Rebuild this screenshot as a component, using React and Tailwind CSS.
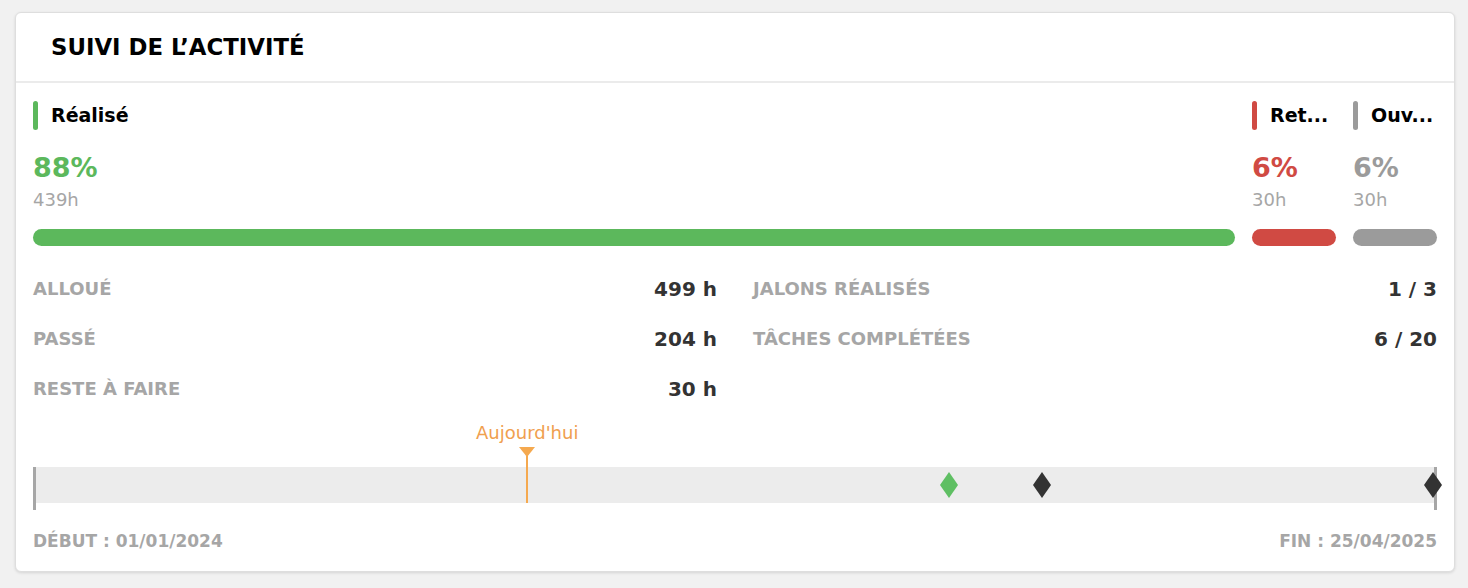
import React from "react";

const font = { fontFamily: '"DejaVu Sans", "Inter", sans-serif' };

const stats = [
  { label: "Alloué", value: "499 h" },
  { label: "Passé", value: "204 h" },
  { label: "Reste à faire", value: "30 h" },
];

const stats2 = [
  { label: "Jalons réalisés", value: "1 / 3" },
  { label: "Tâches complétées", value: "6 / 20" },
];

export default function App() {
  return (
    <div className="min-h-screen bg-[#f1f1f1] px-[15px] pt-[12px]" style={font}>
      <div className="flex h-[560px] w-[1440px] flex-col rounded-md border border-[#dedede] bg-white shadow-[0_1px_3px_rgba(0,0,0,0.12)]">
        {/* Header */}
        <header className="flex h-[70px] shrink-0 items-center border-b-2 border-[#ebebeb] px-[35px]">
          <h2 className="text-[22.8px] font-bold leading-[28px] text-black">SUIVI DE L’ACTIVITÉ</h2>
        </header>

        <div className="flex flex-1 flex-col px-[17px] pt-[18px]">
          {/* Progress columns */}
          <div className="flex gap-[17px]">
            <ProgressCol
              className="flex-1"
              label="Réalisé"
              pct="88%"
              hours="439h"
              bar="bg-[#5cb85c]"
              text="text-[#5cb85c]"
            />
            <ProgressCol
              className="w-[84px]"
              label="Ret..."
              pct="6%"
              hours="30h"
              bar="bg-[#d04a43]"
              text="text-[#d04a43]"
            />
            <ProgressCol
              className="w-[84px]"
              label="Ouv..."
              pct="6%"
              hours="30h"
              bar="bg-[#9b9b9b]"
              text="text-[#9b9b9b]"
            />
          </div>

          {/* Stats */}
          <div className="mt-[18px] grid grid-cols-2 gap-x-[36px]">
            <div className="flex flex-col">
              {stats.map((s) => (
                <StatRow key={s.label} {...s} />
              ))}
            </div>
            <div className="flex flex-col">
              {stats2.map((s) => (
                <StatRow key={s.label} {...s} />
              ))}
            </div>
          </div>

          {/* Timeline */}
          <div className="relative h-[96px] shrink-0">
            <span className="absolute left-[35.2%] top-[8px] -translate-x-1/2 whitespace-nowrap text-[18px] leading-[22px] text-[#f0a04f]">
              Aujourd'hui
            </span>
            <span className="absolute left-[35.2%] top-[33px] h-0 w-0 -translate-x-1/2 border-x-[8px] border-t-[10px] border-x-transparent border-t-[#f5a94f]" />
            <div className="absolute left-0 right-0 top-[53px] h-[36px] bg-[#ececec]" />
            <div className="absolute left-0 top-[53px] h-[43px] w-[3px] bg-[#a6a6a6]" />
            <div className="absolute right-0 top-[53px] h-[43px] w-[3px] bg-[#a6a6a6]" />
            <div className="absolute left-[35.2%] top-[42px] h-[47px] w-[2px] -translate-x-1/2 bg-[#f5a94f]" />
            <Diamond pos="left-[65.25%]" color="fill-[#5fbf63]" />
            <Diamond pos="left-[71.9%]" color="fill-[#333333]" />
            <Diamond pos="left-[99.7%]" color="fill-[#333333]" />
          </div>

          {/* Dates */}
          <div className="mt-[20px] flex justify-between text-[17px] font-bold leading-[22px] text-[#a6a6a6]">
            <span>DÉBUT : 01/01/2024</span>
            <span>FIN : 25/04/2025</span>
          </div>
        </div>
      </div>
    </div>
  );
}

function ProgressCol({ className, label, pct, hours, bar, text }) {
  return (
    <div className={`flex flex-col ${className}`}>
      <div className="flex h-[29px] items-center gap-[13px]">
        <span className={`h-[29px] w-[5px] shrink-0 rounded-sm ${bar}`} />
        <span className="whitespace-nowrap text-[19px] font-bold leading-[29px] text-black">{label}</span>
      </div>
      <div className={`mt-[22px] text-[27px] font-bold leading-[32px] ${text}`}>{pct}</div>
      <div className="text-[18px] leading-[32px] text-[#a6a6a6]">{hours}</div>
      <div className={`mt-[13px] h-[17px] rounded-full ${bar}`} />
    </div>
  );
}

function StatRow({ label, value }) {
  return (
    <div className="flex h-[50px] items-center justify-between">
      <span className="text-[18px] font-bold uppercase leading-[24px] text-[#a6a6a6]">{label}</span>
      <span className="text-[20px] font-bold leading-[24px] text-[#333333]">{value}</span>
    </div>
  );
}

function Diamond({ pos, color }) {
  return (
    <svg
      className={`absolute top-[57px] -translate-x-1/2 ${pos} ${color}`}
      width="20"
      height="28"
      viewBox="0 0 20 28"
    >
      <path d="M10 1 L19 14 L10 27 L1 14 Z" />
    </svg>
  );
}
